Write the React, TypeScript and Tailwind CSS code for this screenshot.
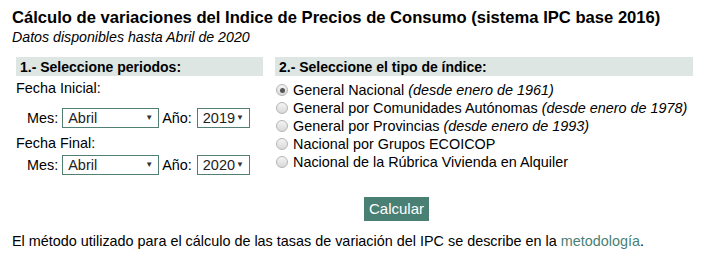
import React from 'react';

const options = [
  { label: 'General Nacional', since: '(desde enero de 1961)', checked: true },
  { label: 'General por Comunidades Autónomas', since: '(desde enero de 1978)' },
  { label: 'General por Provincias', since: '(desde enero de 1993)' },
  { label: 'Nacional por Grupos ECOICOP' },
  { label: 'Nacional de la Rúbrica Vivienda en Alquiler' },
];

const FakeSelect: React.FC<{ value: string; width: string }> = ({ value, width }) => (
  <div
    className={`flex h-[20px] items-center justify-between border border-[#527f74] bg-white pl-[5px] pr-[5px] ${width}`}
  >
    <span className="text-[14.5px] leading-none text-[#222]">{value}</span>
    <span className="text-[8px] leading-none text-[#333]">▼</span>
  </div>
);

const DateRow: React.FC<{ year: string }> = ({ year }) => (
  <div className="flex h-[20px] items-center pl-[11px]">
    <span className="mr-[4px]">Mes:</span>
    <FakeSelect value="Abril" width="w-[97px]" />
    <span className="ml-[3px] mr-[5px]">Año:</span>
    <FakeSelect value={year} width="w-[53px]" />
  </div>
);

const Radio: React.FC<{ checked?: boolean }> = ({ checked }) => (
  <span className="mr-[5px] flex h-[12px] w-[12px] items-center justify-center rounded-full border border-[#b4b4b4] bg-linear-to-b from-[#f4f4f4] to-[#d9d9d9]">
    {checked && <span className="h-[5px] w-[5px] rounded-full bg-[#555]" />}
  </span>
);

export default function App() {
  return (
    <div className="h-[262px] w-[706px] bg-white text-[14.4px] leading-[16px] text-black" style={{ fontFamily: '"Liberation Sans", Arial, sans-serif' }}>
      <div className="pl-[12px] pt-[9px]">
        <h1 className="text-[16.6px] font-bold leading-[18px]">
          Cálculo de variaciones del Indice de Precios de Consumo (sistema IPC base 2016)
        </h1>
        <p className="mt-[2px] text-[14.2px] italic leading-[16px]">Datos disponibles hasta Abril de 2020</p>
      </div>

      <div className="ml-[16px] mt-[12px] flex gap-[12px]">
        <div className="w-[247px]">
          <div className="flex h-[19px] items-center bg-[#dde6e3] pl-[4px] text-[14px] font-bold">
            1.- Seleccione periodos:
          </div>
          <div className="mt-[4px] h-[16px] leading-[16px]">Fecha Inicial:</div>
          <div className="mt-[12px]">
            <DateRow year="2019" />
          </div>
          <div className="mt-[7px] h-[16px] leading-[16px]">Fecha Final:</div>
          <div className="mt-[4px]">
            <DateRow year="2020" />
          </div>
        </div>

        <div className="w-[418px]">
          <div className="flex h-[19px] items-center bg-[#dde6e3] pl-[4px] text-[14px] font-bold">
            2.- Seleccione el tipo de índice:
          </div>
          <ul className="mt-[5px] pl-[1px]">
            {options.map((o) => (
              <li key={o.label} className="flex h-[18px] items-center">
                <Radio checked={o.checked} />
                <span>
                  {o.label}
                  {o.since && <i> {o.since}</i>}
                </span>
              </li>
            ))}
          </ul>
        </div>
      </div>

      <div className="mt-[22px] pl-[364px]">
        <button className="h-[24px] w-[65px] bg-[#4a7f73] text-[15px] text-white">Calcular</button>
      </div>

      <p className="mt-[12px] pl-[12px] text-[14.4px] leading-[16px]">
        El método utilizado para el cálculo de las tasas de variación del IPC se describe en la{' '}
        <a className="text-[#4a7f73]">metodología</a>.
      </p>
    </div>
  );
}
